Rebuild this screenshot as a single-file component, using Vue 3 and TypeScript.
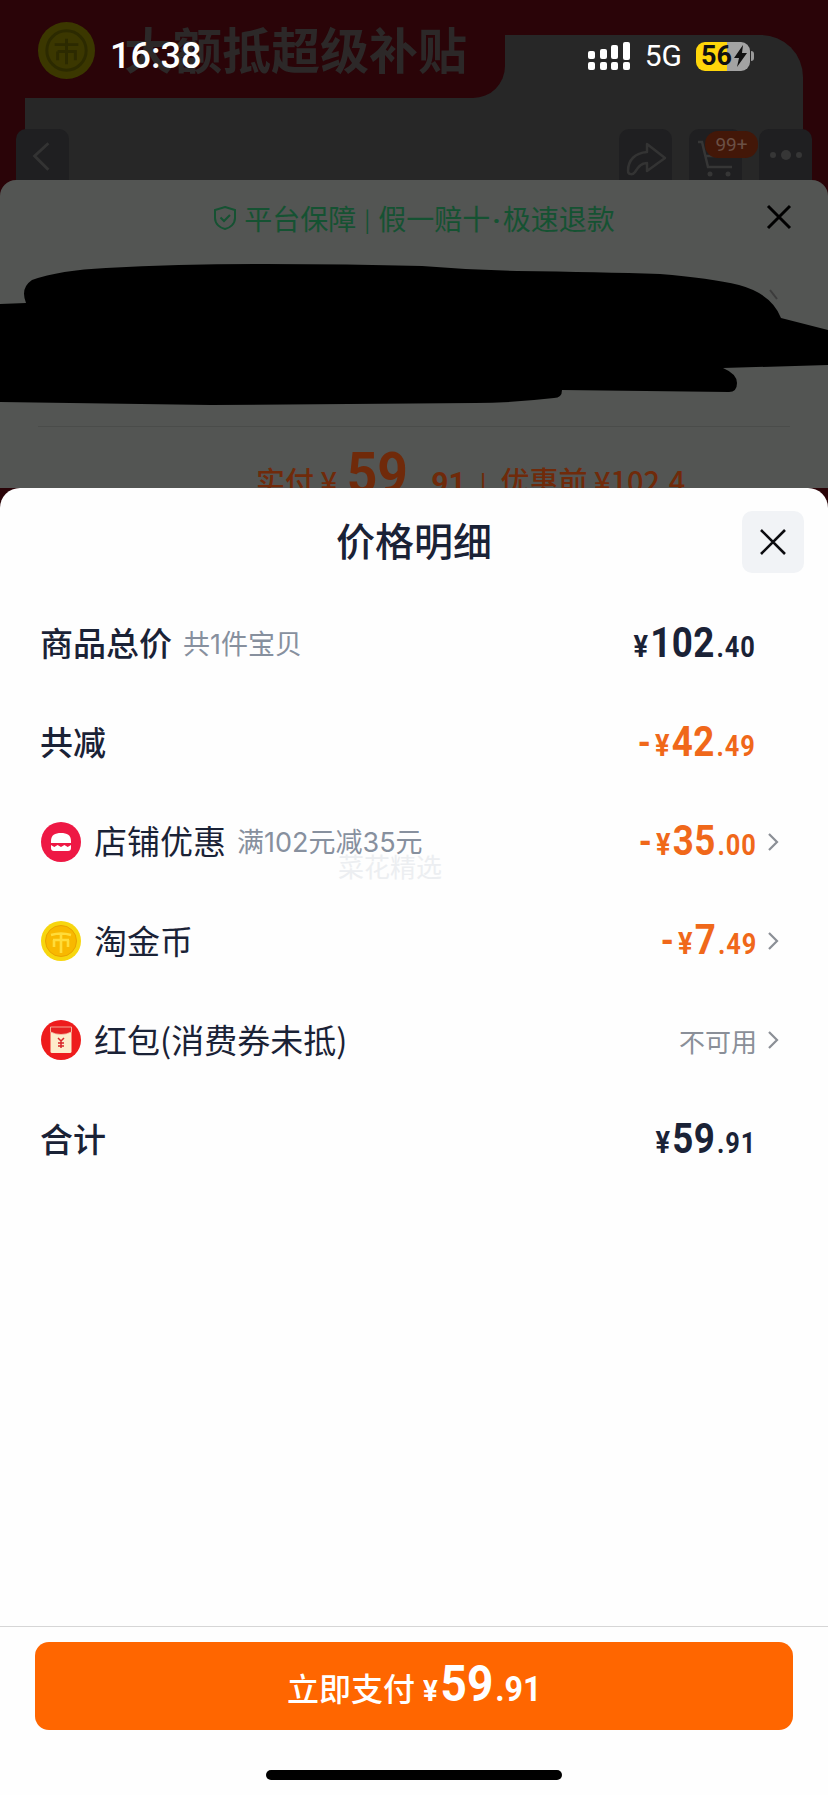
<script setup lang="ts">
type Row = {
  label: string
  bold?: boolean
  hint?: string
  icon?: 'shop' | 'coin' | 'packet'
  sign?: string
  int?: string
  dec?: string
  text?: string
  orange?: boolean
  arrow?: boolean
}

const rows: Row[] = [
  { label: '商品总价', bold: true, hint: '共1件宝贝', int: '102', dec: '40' },
  { label: '共减', bold: true, sign: '-', int: '42', dec: '49', orange: true },
  { label: '店铺优惠', icon: 'shop', hint: '满102元减35元', sign: '-', int: '35', dec: '00', orange: true, arrow: true },
  { label: '淘金币', icon: 'coin', sign: '-', int: '7', dec: '49', orange: true, arrow: true },
  { label: '红包(消费券未抵)', icon: 'packet', text: '不可用', arrow: true },
  { label: '合计', bold: true, int: '59', dec: '91' }
]
</script>

<template>
  <div class="page">
    <header class="hero">
      <div class="hero__panel"></div>
      <div class="hero__tab">
        <svg class="hero__coin" viewBox="0 0 60 60">
          <circle cx="30" cy="30" r="29" fill="#3b3700" />
          <circle cx="30" cy="30" r="20" fill="none" stroke="#2c2a00" stroke-width="3" />
          <path d="M18 24h24M30 18v26M21 31h18v9M21 31v9" fill="none" stroke="#2c2a00" stroke-width="3" />
        </svg>
        <span class="hero__title">大额抵超级补贴</span>
      </div>
      <div class="hero__nav">
        <div class="nav-btn">
          <svg viewBox="0 0 54 51" width="54" height="51"><path d="M33 14 L19 27 L33 41" fill="none" stroke="#333" stroke-width="3" /></svg>
        </div>
        <div class="nav-btn nav-btn--share">
          <svg viewBox="0 0 53 51" width="53" height="51"><path d="M9 42c0-11 7-18 19-19v-8l18 14-18 13v-8c-6 0-9 4-12 9-2 3-7 3-7-1z" fill="none" stroke="#333" stroke-width="2.5" stroke-linejoin="round" /></svg>
        </div>
        <div class="nav-btn nav-btn--cart">
          <svg viewBox="0 0 52 51" width="52" height="51"><path d="M8 13h4l6 25h24M16 27h27l2-9" fill="none" stroke="#363636" stroke-width="2.5" /><circle cx="20" cy="45" r="2.5" fill="#363636" /><circle cx="38" cy="45" r="2.5" fill="#363636" /></svg>
          <span class="nav-btn__badge">99+</span>
        </div>
        <div class="nav-btn nav-btn--more">
          <i></i><i class="big"></i><i></i>
        </div>
      </div>
    </header>

    <section class="order">
      <div class="order__top">
        <svg class="order__shield" viewBox="0 0 24 26" width="24" height="26">
          <path d="M12 2l10 3v8c0 6-5 10-10 11C7 23 2 19 2 13V5z" fill="none" stroke="#155232" stroke-width="2" />
          <path d="M7.5 12.5l3.5 3.5 6-6" fill="none" stroke="#155232" stroke-width="2" />
        </svg>
        <span>平台保障</span>
        <span class="order__bar">|</span>
        <span>假一赔十<span class="order__dot">·</span>极速退款</span>
        <svg class="order__close" viewBox="0 0 26 26" width="26" height="26">
          <path d="M2 2l22 22M24 2L2 24" stroke="#000" stroke-width="3" />
        </svg>
      </div>
      <div class="order__product">
        <svg class="order__blob" viewBox="0 0 828 145" width="828" height="145">
          <path d="M0 40 L26 39 Q20 24 32 16 Q60 6 106 4 Q180 0 264 0 Q350 0 422 2 Q470 6 517 7 Q600 8 660 10 Q710 14 739 21 Q772 30 781 54 L828 66 L828 101 L723 104 Q737 110 737 119 Q737 128 729 128 L562 126 Q562 134 554 134 Q510 139 475 139 L211 141 L0 138 Z" fill="#000" />
          <path d="M770 26l7 9" stroke="#3c3c3c" stroke-width="2" />
        </svg>
      </div>
      <div class="order__price">
        <span class="order__label">实付 ¥</span>
        <span class="order__big">59</span>
        <span class="order__label order__label--dec">.91</span>
        <span class="order__label order__sep">|</span>
        <span class="order__label">优惠前 ¥102.4</span>
      </div>
    </section>

    <section class="sheet">
      <div class="sheet__head">
        <h2 class="sheet__title">价格明细</h2>
        <button class="sheet__close">
          <svg viewBox="0 0 28 26" width="28" height="26"><path d="M2 1l24 24M26 1L2 25" stroke="#0c0c10" stroke-width="2.6" /></svg>
        </button>
      </div>

      <ul class="list">
        <li v-for="row in rows" :key="row.label" class="row">
          <svg v-if="row.icon === 'shop'" class="row__icon" viewBox="0 0 40 40">
            <circle cx="20" cy="20" r="20" fill="#ee1844" />
            <path d="M10 21v-2c0-6 4-8 10-8s10 2 10 8v2z" fill="#fff" />
            <path d="M10 23l3.3 2 3.3-2 3.4 2 3.4-2 3.3 2 3.3-2v3c0 2-1 3-3 3H13c-2 0-3-1-3-3z" fill="#fff" />
          </svg>
          <svg v-else-if="row.icon === 'coin'" class="row__icon" viewBox="0 0 40 40">
            <circle cx="20" cy="20" r="20" fill="#f7d60f" />
            <circle cx="20" cy="20" r="15.5" fill="#f8b800" stroke="#eaa200" stroke-width="1" />
            <path d="M10 14q10-3 20 0M20 12v20M12 19h16M13 19v7M27 19v7" fill="none" stroke="#ffdc3a" stroke-width="2.6" />
          </svg>
          <svg v-else-if="row.icon === 'packet'" class="row__icon" viewBox="0 0 40 40">
            <circle cx="20" cy="20" r="20" fill="#ee1c1c" />
            <rect x="9.5" y="7" width="21" height="26" rx="1.5" fill="#fdeccb" />
            <path d="M9.5 7h21v5q-10.500 5-21 0z" fill="#e52222" stroke="#f6c9b0" stroke-width="0.8" />
            <path d="M17 18l3 3 3-3M20 21v7M17 23h6M17 26h6" fill="none" stroke="#d8262a" stroke-width="1.5" />
          </svg>

          <span class="row__label" :class="{ 'row__label--bold': row.bold }">{{ row.label }}</span>
          <span v-if="row.hint" class="row__hint">{{ row.hint }}</span>

          <span v-if="row.text" class="row__text">{{ row.text }}</span>
          <span v-else class="amount" :class="{ 'amount--orange': row.orange }">
            <span v-if="row.sign" class="amount__small amount__sign">{{ row.sign }}</span>
            <span class="amount__small amount__yen">¥</span>
            <span class="amount__int">{{ row.int }}</span>
            <span class="amount__small amount__dec">.{{ row.dec }}</span>
          </span>

          <svg v-if="row.arrow" class="row__arrow" viewBox="0 0 12 20" width="12" height="20">
            <path d="M2 2l8 8-8 8" fill="none" stroke="#8b8f96" stroke-width="2.2" />
          </svg>
          <span v-else class="row__noarrow"></span>
        </li>
      </ul>

      <span class="watermark">菜花精选</span>

      <footer class="foot">
        <button class="pay">
          <span class="pay__label">立即支付</span>
          <span class="pay__num">
            <span class="pay__yen">¥</span>
            <span class="pay__int">59</span>
            <span class="pay__dec">.91</span>
          </span>
        </button>
        <div class="home-bar"></div>
      </footer>
    </section>

    <div class="status">
      <span class="status__time">16:38</span>
      <span class="status__right">
        <svg viewBox="0 0 42 28" width="42" height="28">
          <g fill="#fff">
            <rect x="0" y="9" width="7" height="8" rx="2" />
            <rect x="12" y="7" width="7" height="10" rx="2" />
            <rect x="23" y="3" width="7" height="14" rx="2" />
            <rect x="35" y="0" width="7" height="18" rx="2" />
            <rect x="0" y="20" width="7" height="8" rx="2" />
            <rect x="12" y="20" width="7" height="8" rx="2" />
            <rect x="23" y="20" width="7" height="8" rx="2" />
            <rect x="35" y="20" width="7" height="8" rx="2" />
          </g>
        </svg>
        <span class="status__net">5G</span>
        <span class="battery">
          <span class="battery__num">56</span>
          <svg class="battery__bolt" viewBox="0 0 14 22" width="14" height="22"><path d="M9 0L0 13h5l-2 9 10-14H8z" fill="#111" /></svg>
        </span>
        <span class="battery__tip"></span>
      </span>
    </div>
  </div>
</template>

<style scoped>
.page {
  position: relative;
  width: 828px;
  height: 1795px;
  overflow: hidden;
  display: flex;
  flex-direction: column;
  background: #2a0408;
  font-family: "Noto Sans CJK SC", "Noto Sans", sans-serif;
}

.hero {
  position: relative;
  flex: none;
  height: 180px;
  padding: 35px 25px 0;
  box-sizing: border-box;
}

.hero__panel {
  height: 145px;
  background: #272727;
  border-radius: 0 42px 0 0;
}

.hero__tab {
  position: absolute;
  left: 0;
  top: 0;
  width: 505px;
  height: 98px;
  display: flex;
  align-items: flex-start;
  padding: 21px 0 0 37px;
  box-sizing: border-box;
  background: #2a0408;
  border-radius: 0 0 32px 0;
}

.hero__coin {
  flex: none;
  width: 59px;
  height: 59px;
}

.hero__title {
  margin: -5px 0 0 28px;
  font-size: 49px;
  line-height: 64px;
  font-weight: 700;
  color: #2c2828;
  white-space: nowrap;
}

.hero__nav {
  position: absolute;
  left: 16px;
  right: 16px;
  top: 129px;
  display: flex;
  gap: 17px;
}

.nav-btn {
  position: relative;
  width: 53px;
  height: 51px;
  background: #1f1f21;
  border-radius: 10px 10px 0 0;
  display: flex;
  align-items: center;
  justify-content: center;
  gap: 5px;
}

.nav-btn--share {
  margin-left: auto;
}

.nav-btn__badge {
  position: absolute;
  right: -16px;
  top: 2px;
  width: 53px;
  height: 27px;
  border-radius: 13px;
  background: #431708;
  color: #6b5045;
  font: 400 19px/27px Roboto, sans-serif;
  text-align: center;
}

.nav-btn--more i {
  width: 6px;
  height: 6px;
  border-radius: 50%;
  background: #363636;
}

.nav-btn--more i.big {
  width: 10px;
  height: 10px;
}

.order {
  flex: none;
  height: 308px;
  overflow: hidden;
  background: #535553;
  border-radius: 16px 16px 0 0;
}

.order__top {
  position: relative;
  height: 75px;
  display: flex;
  align-items: center;
  justify-content: center;
  font-size: 28px;
  color: #155232;
}

.order__shield {
  margin-right: 7px;
}

.order__bar {
  margin: 0 8px;
  font-size: 22px;
}

.order__dot {
  margin: 0 2px;
  font-family: Roboto, sans-serif;
  font-weight: 700;
}

.order__close {
  position: absolute;
  right: 36px;
  top: 24px;
}

.order__product {
  position: relative;
  height: 172px;
}

.order__product::after {
  content: "";
  position: absolute;
  left: 38px;
  right: 38px;
  bottom: 0;
  height: 1px;
  background: #4a4c4a;
}

.order__blob {
  position: absolute;
  left: 0;
  top: 9px;
}

.order__price {
  display: flex;
  align-items: baseline;
  gap: 5px;
  padding: 14px 0 0 256px;
  color: #702a0a;
  white-space: nowrap;
}

.order__label {
  font-size: 29px;
  font-weight: 500;
}

.order__big {
  margin: 0 1px 0 2px;
  font-family: Roboto, sans-serif;
  font-size: 58px;
  line-height: 64px;
  font-weight: 700;
  transform: scaleX(0.92);
}

.order__label--dec {
  margin-left: 6px;
  font-family: Roboto, sans-serif;
  font-size: 30px;
  font-weight: 700;
}

.order__sep {
  margin: 0 9px;
  font-size: 24px;
}

.sheet {
  position: relative;
  flex: 1;
  display: flex;
  flex-direction: column;
  background: #fefefe;
  border-radius: 20px 20px 0 0;
}

.sheet__head {
  position: relative;
  height: 106px;
  flex: none;
}

.sheet__title {
  margin: 0;
  padding-top: 31px;
  text-align: center;
  font-size: 39px;
  line-height: 40px;
  font-weight: 500;
  color: #1a2236;
}

.sheet__close {
  position: absolute;
  right: 24px;
  top: 23px;
  width: 62px;
  height: 62px;
  padding: 0;
  border: 0;
  border-radius: 10px;
  background: #f1f3f6;
  display: flex;
  align-items: center;
  justify-content: center;
}

.list {
  margin: 0;
  padding: 0 49px 0 40px;
  list-style: none;
}

.row {
  height: 99.2px;
  display: flex;
  align-items: center;
  color: #1a2236;
}

.row__icon {
  flex: none;
  width: 40px;
  height: 40px;
  margin: 0 13px 0 1px;
}

.row__label {
  margin-bottom: 3px;
  font-size: 33px;
  line-height: 44px;
  font-weight: 400;
  white-space: nowrap;
}

.row__label--bold {
  font-weight: 500;
}

.row__hint {
  margin: 0 0 2px 11px;
  font-family: Inter, "Noto Sans CJK SC", sans-serif;
  font-size: 27px;
  color: #87909e;
  white-space: nowrap;
}

.row__text {
  margin-left: auto;
  font-size: 26px;
  color: #8a8f98;
}

.row__arrow {
  flex: none;
  margin-left: 10px;
}

.row__noarrow {
  flex: none;
  width: 23px;
}

.amount {
  margin-left: auto;
  display: flex;
  align-items: baseline;
  font-family: Roboto, sans-serif;
  font-weight: 700;
  color: #1a2236;
  transform: scaleX(0.875);
  transform-origin: right center;
}

.amount--orange {
  color: #f0681a;
}

.amount__small {
  font-size: 29px;
  letter-spacing: 0.6px;
}

.amount__sign {
  margin-right: 4px;
  font-size: 38px;
}

.amount__yen {
  margin-right: 2px;
  font-size: 31px;
}

.amount__int {
  font-size: 42px;
  line-height: 42px;
  letter-spacing: 0.5px;
}

.amount__dec {
  margin-left: 2px;
  letter-spacing: 1px;
}

.watermark {
  position: absolute;
  left: 338px;
  top: 360px;
  font-size: 26px;
  line-height: 36px;
  color: #eceef1;
  pointer-events: none;
}

.foot {
  margin-top: auto;
  padding-top: 15px;
  border-top: 1px solid #d6d6d6;
  display: flex;
  flex-direction: column;
  align-items: center;
  height: 169px;
  box-sizing: border-box;
}

.pay {
  width: 758px;
  height: 88px;
  padding: 0;
  border: 0;
  border-radius: 14px;
  background: #ff6600;
  color: #fff;
  display: flex;
  align-items: baseline;
  justify-content: center;
  line-height: 84px;
  font-family: "Noto Sans CJK SC", sans-serif;
}

.pay__label {
  font-size: 32px;
  font-weight: 500;
}

.pay__num {
  display: flex;
  align-items: baseline;
  margin: 0 -11px 0 8px;
  font-family: Roboto, sans-serif;
  font-weight: 700;
  transform: scaleX(0.92);
  transform-origin: left center;
}

.pay__yen {
  font-size: 30px;
}

.pay__int {
  margin-left: 3px;
  font-size: 50px;
}

.pay__dec {
  margin-left: 2px;
  font-size: 35px;
}

.home-bar {
  width: 296px;
  height: 10px;
  margin-top: 40px;
  border-radius: 5px;
  background: #000;
}

.status {
  position: absolute;
  left: 110px;
  right: 74px;
  top: 40px;
  height: 32px;
  display: flex;
  align-items: center;
  justify-content: space-between;
  color: #fff;
  font-family: Roboto, sans-serif;
}

.status__time {
  font-size: 36px;
  font-weight: 500;
  line-height: 32px;
}

.status__right {
  display: flex;
  align-items: center;
}

.status__net {
  margin-left: 15px;
  font-size: 30px;
  line-height: 32px;
}

.battery {
  position: relative;
  width: 54px;
  height: 29px;
  margin-left: 14px;
  border-radius: 9px;
  background: linear-gradient(to right, #ffd60a 0 58%, #a3a3a3 58% 100%);
  display: flex;
  align-items: center;
  color: #111;
}

.battery__num {
  margin-left: 5px;
  font-size: 27px;
  font-weight: 700;
  line-height: 29px;
}

.battery__bolt {
  margin-left: 2px;
}

.battery__tip {
  width: 3px;
  height: 10px;
  margin-left: 1px;
  border-radius: 0 3px 3px 0;
  background: #9a9a9a;
}
</style>

<style>
body {
  background: #fff;
}
</style>
